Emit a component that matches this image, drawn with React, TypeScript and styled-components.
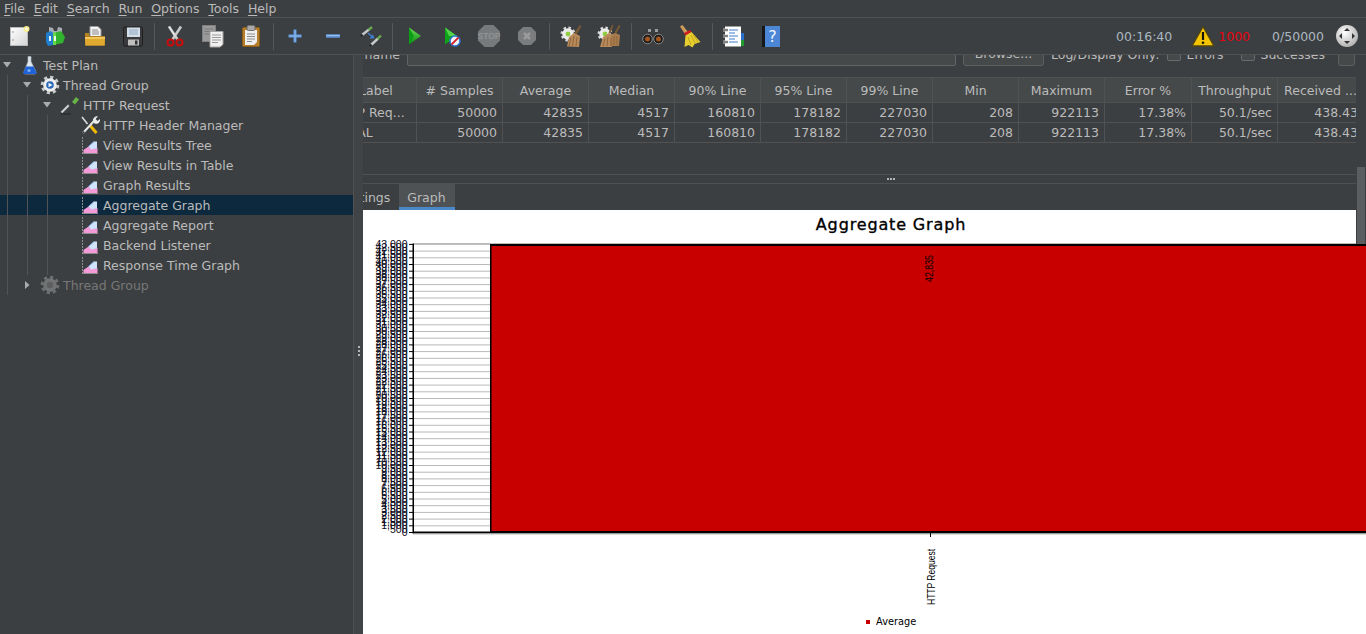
import React from 'react'
import styled, { createGlobalStyle } from 'styled-components'

const GlobalStyle = createGlobalStyle`
  html, body {
    margin: 0;
    height: 100%;
    overflow: hidden;
    background: #3c3f41;
  }
`

const Window = styled.div`
  width: 1366px;
  height: 634px;
  display: flex;
  flex-direction: column;
  overflow: hidden;
  background: #3c3f41;
  color: #bbbbbb;
  font: 12.5px 'DejaVu Sans', sans-serif;
`

const MenuBar = styled.div`
  height: 17px;
  flex: none;
  display: flex;
  align-items: center;
  gap: 8.8px;
  padding-left: 4px;
  border-bottom: 1px solid #515151;
`

const MenuItem = styled.span`
  line-height: 16px;
  & u {
    text-underline-offset: 2px;
  }
`

const Toolbar = styled.div`
  height: 36px;
  flex: none;
  display: flex;
  align-items: center;
  border-bottom: 1px solid #515151;
  position: relative;
  z-index: 2;
  background: #3c3f41;
`

const ToolButton = styled.div`
  width: 38px;
  height: 36px;
  flex: none;
  display: flex;
  align-items: center;
  justify-content: center;
`

const Separator = styled.div<{ $w: number }>`
  width: ${p => p.$w}px;
  height: 27px;
  flex: none;
  display: flex;
  justify-content: center;
  &::after {
    content: '';
    width: 1px;
    background: #55585a;
  }
`

const Status = styled.div`
  margin-left: auto;
  display: flex;
  align-items: center;
  padding-right: 7px;
`

const StatusText = styled.span<{ $left: number; $red?: boolean }>`
  margin-left: ${p => p.$left}px;
  color: ${p => (p.$red ? '#e8000d' : '#a9b7c0')};
`

const StatusIcon = styled.div<{ $left: number }>`
  margin-left: ${p => p.$left}px;
  height: 24px;
`

const Body = styled.div`
  flex: 1;
  min-height: 0;
  display: flex;
`

const TreePane = styled.div`
  width: 353px;
  flex: none;
`

const TreeRow = styled.div<{ $selected?: boolean; $disabled?: boolean }>`
  height: 20px;
  display: flex;
  align-items: center;
  background: ${p => (p.$selected ? '#0d293e' : 'transparent')};
  color: ${p => (p.$disabled ? '#777777' : '#bbbbbb')};
`

const Guide = styled.span`
  width: 20px;
  height: 20px;
  flex: none;
  background: linear-gradient(#515356, #515356) 7px 0 / 1px 100% no-repeat;
`

const ArrowCell = styled.span`
  width: 20px;
  height: 20px;
  flex: none;
  display: flex;
  align-items: center;
`

const TreeIconBox = styled.span`
  width: 20px;
  height: 20px;
  flex: none;
  margin-right: 3px;
`

const Splitter = styled.div`
  width: 10px;
  flex: none;
  box-sizing: border-box;
  border-left: 1px solid #515151;
  background: #414446;
  display: flex;
  flex-direction: column;
  gap: 2px;
  align-items: center;
  justify-content: center;
  padding-top: 12px;
`

const Dot = styled.i`
  width: 2px;
  height: 2px;
  background: #b5b5b5;
  display: block;
`

const Main = styled.div`
  flex: 1;
  min-width: 0;
  position: relative;
  overflow: hidden;
  display: flex;
  flex-direction: column;
`

const FormRow = styled.div`
  height: 24px;
  flex: none;
  margin-top: -13px;
  display: flex;
  align-items: center;
  white-space: nowrap;
`

const FormLabel = styled.span`
  width: 37px;
  flex: none;
  overflow: hidden;
  direction: rtl;
`

const FormInput = styled.div`
  width: 549px;
  height: 23px;
  margin-left: 7px;
  flex: none;
  box-sizing: border-box;
  border: 1px solid #646464;
  border-radius: 2px;
  background: #45494a;
`

const FormButton = styled.div<{ $w: number; $left: number }>`
  width: ${p => p.$w}px;
  height: 23px;
  margin-left: ${p => p.$left}px;
  flex: none;
  box-sizing: border-box;
  border: 1px solid #5e6060;
  border-radius: 3px;
  background: #45494a;
  text-align: center;
  line-height: 20px;
`

const FormText = styled.span<{ $left: number }>`
  margin-left: ${p => p.$left}px;
`

const CheckBox = styled.span<{ $left: number }>`
  width: 14px;
  height: 14px;
  margin-left: ${p => p.$left}px;
  flex: none;
  box-sizing: border-box;
  border: 1px solid #6b6b6b;
  border-radius: 2px;
  background: #45494a;
`

const TableClip = styled.div`
  margin-top: 11px;
  margin-right: 10px;
  flex: none;
  overflow: hidden;
`

const TableRow = styled.div<{ $head?: boolean }>`
  display: flex;
  margin-left: -33px;
  width: 1040px;
  height: ${p => (p.$head ? 24 : 19)}px;
  line-height: ${p => (p.$head ? 26 : 19)}px;
  border-top: ${p => (p.$head ? '1px solid #515151' : 'none')};
  border-bottom: 1px solid #515151;
  background: ${p => (p.$head ? '#45494a' : 'transparent')};
`

const Cell = styled.div<{ $w: number; $align: string; $pad: string }>`
  width: ${p => p.$w}px;
  flex: none;
  box-sizing: border-box;
  border-right: 1px solid #515151;
  text-align: ${p => p.$align};
  padding: ${p => p.$pad};
  white-space: nowrap;
  overflow: hidden;
`

const HSplit = styled.div`
  margin-top: 31px;
  height: 8px;
  flex: none;
  margin-right: 10px;
  padding-left: 62px;
  border-top: 1px solid #515151;
  border-bottom: 1px solid #515151;
  display: flex;
  align-items: center;
  justify-content: center;
  gap: 1px;
`

const TabBar = styled.div`
  height: 26px;
  flex: none;
  display: flex;
  margin-left: -32px;
`

const Tab = styled.div<{ $active?: boolean }>`
  box-sizing: border-box;
  padding: 0 9px 0 8px;
  line-height: 27px;
  background: ${p => (p.$active ? '#4e5254' : 'transparent')};
  border-bottom: 3px solid ${p => (p.$active ? '#4a88c7' : 'transparent')};
`

const ChartCanvas = styled.svg`
  display: block;
  flex: none;
  background: #ffffff;
`

const ScrollThumb = styled.div`
  position: absolute;
  top: 112px;
  right: 0;
  width: 8px;
  height: 77px;
  background: #5b5d5f;
  border-left: 1px solid #3c3f41;
  border-right: 1px solid #3c3f41;
`

// toolbar drawings, all on a 24px square
const NewIcon = () => (
  <svg width="24" height="24">
    <defs>
      <linearGradient id="pg" x1="0" y1="0" x2="1" y2="1">
        <stop offset="0" stopColor="#ffffff" />
        <stop offset="1" stopColor="#d4d4d4" />
      </linearGradient>
    </defs>
    <rect x="3.500" y="3.500" width="17" height="18" fill="url(#pg)" stroke="#b9b9b9" />
    <circle cx="6" cy="8" r="0.8" fill="#888" />
    <circle cx="6" cy="16" r="0.8" fill="#888" />
    <circle cx="19.500" cy="5" r="3" fill="#f7e98a" />
    <circle cx="19.500" cy="5" r="1.500" fill="#fffde0" />
  </svg>
)

const TemplatesIcon = () => (
  <svg width="24" height="24">
    <path d="M4 3l4 1 1 3h3l1-4 4 1v5H4z" fill="#a8aeb4" />
    <path d="M1 9l5-2 2 2v12l-5 1-2-4z" fill="#1f7fce" />
    <rect x="4" y="12" width="2" height="5" fill="#e9f4fb" />
    <path d="M8 9l8-2 4 6-2 6-10 2z" fill="#32b32f" />
    <path d="M8 9l3-1v13l-3 0z" fill="#66d84a" />
    <rect x="9" y="12" width="2" height="5" fill="#e8fbe5" />
  </svg>
)

const OpenIcon = () => (
  <svg width="24" height="24">
    <path d="M7 2.500h8l3 3v9H7z" fill="#f3f3f3" stroke="#9c9c9c" />
    <path d="M9 6h6M9 8h7M9 10h7" stroke="#8b8b8b" />
    <path d="M2 9h4v3h16v9.500H2z" fill="#b5831d" />
    <path d="M2 13h20l-.5 8.500H2.500z" fill="#e0aa2f" />
    <path d="M2 13h20v2H2z" fill="#f1c75d" />
  </svg>
)

const SaveIcon = () => (
  <svg width="24" height="24">
    <rect x="2.500" y="3" width="19" height="19" rx="1.500" fill="#3a3a3c" stroke="#1e1e1e" />
    <rect x="6" y="3.500" width="13" height="9.500" fill="#d5dfe9" />
    <path d="M8 6h9M8 8h9M8 10h9" stroke="#8fa8c2" />
    <rect x="7" y="15.500" width="11" height="6" fill="#bfbfbf" />
    <rect x="14" y="16.500" width="2.500" height="4" fill="#333" />
  </svg>
)

const CutIcon = () => (
  <svg width="24" height="24">
    <path d="M6 2.500l8.500 13M18 2.500L9.500 15.500" stroke="#c9c9c9" strokeWidth="2.600" />
    <path d="M6 2.500l6.500 10" stroke="#f2f2f2" />
    <circle cx="7.500" cy="18.500" r="3" fill="none" stroke="#c80d0d" strokeWidth="2" />
    <circle cx="16.500" cy="18.500" r="3" fill="none" stroke="#c80d0d" strokeWidth="2" />
  </svg>
)

const CopyIcon = () => (
  <svg width="24" height="24">
    <rect x="1.500" y="1.500" width="13" height="16" fill="#9a9a9a" stroke="#808080" />
    <path d="M3.500 5h9M3.500 7.500h9M3.500 10h9" stroke="#7a7a7a" />
    <path d="M9 7.500h13v13l-3 2.500H9z" fill="#f0f0f0" stroke="#a5a5a5" />
    <path d="M11 11h9M11 13.500h9M11 16h9M11 18.500h6" stroke="#9a9a9a" />
  </svg>
)

const PasteIcon = () => (
  <svg width="24" height="24">
    <rect x="3.500" y="3.500" width="17" height="19" rx="1" fill="#b67e2a" stroke="#8a5c16" />
    <path d="M6 6h12v12l-3 3H6z" fill="#efefef" />
    <path d="M8 10h8M8 12.500h8M8 15h8M8 17.500h5" stroke="#8c8c8c" />
    <rect x="8" y="1.500" width="8" height="5" rx="1.500" fill="#a8a8a8" stroke="#6f6f6f" />
  </svg>
)

const PlusIcon = () => (
  <svg width="24" height="24">
    <path d="M12 5.500v13M5.500 12h13" stroke="#5f97db" strokeWidth="3" />
    <path d="M12 6v12M6 12h12" stroke="#8bb7ea" />
  </svg>
)

const MinusIcon = () => (
  <svg width="24" height="24">
    <path d="M5 12h14" stroke="#5f97db" strokeWidth="3.500" />
    <path d="M5.500 11.500h13" stroke="#9bc0ed" />
  </svg>
)

const ToggleIcon = () => (
  <svg width="24" height="24">
    <path d="M3 11l7-5.500" stroke="#c8c8c8" strokeWidth="2.400" />
    <path d="M2 12l1.500-1.500" stroke="#222" strokeWidth="2" />
    <path d="M9.500 6l3.500-3" stroke="#6aa84f" strokeWidth="2.400" />
    <path d="M12 21l7-6.500" stroke="#c8c8c8" strokeWidth="2.400" />
    <path d="M11 22l1.500-1.500" stroke="#222" strokeWidth="2" />
    <path d="M18.500 15l3.500-3.500" stroke="#6aa84f" strokeWidth="2.400" />
    <path d="M9 9l4 3.500" stroke="#3f7fd0" strokeWidth="1.500" />
    <path d="M15.500 14.500l-5 0 3.500-4z" fill="#3f7fd0" />
  </svg>
)

const PlayIcon = () => (
  <svg width="24" height="24">
    <defs>
      <linearGradient id="gr" x1="0" y1="0" x2="0" y2="1">
        <stop offset="0" stopColor="#6fe05b" />
        <stop offset="1" stopColor="#06890e" />
      </linearGradient>
    </defs>
    <path d="M8 3.500L20 12 8 20.500z" fill="url(#gr)" />
    <path d="M8 3.500V20.500L13 12z" fill="#0a9d16" />
  </svg>
)

const PlayNoPauseIcon = () => (
  <svg width="24" height="24">
    <path d="M6 3.500L18 12 6 20.500z" fill="#10a31a" />
    <path d="M6 3.500L18 12H10z" fill="#54d44a" />
    <circle cx="16" cy="17" r="5" fill="#f2f6fc" stroke="#2d73d0" strokeWidth="1.500" />
    <path d="M12.500 20.500l7-7" stroke="#d8232a" strokeWidth="1.800" />
  </svg>
)

const StopIcon = () => (
  <svg width="24" height="24">
    <path d="M7.500 1h9L23 7.500v9L16.500 23h-9L1 16.500v-9z" fill="#777a7c" />
    <text x="12" y="15" textAnchor="middle" fontFamily="'Liberation Sans', sans-serif" fontSize="8.500" fontWeight="700" fill="#909395">STOP</text>
  </svg>
)

const ShutdownIcon = () => (
  <svg width="24" height="24">
    <path d="M8 3h8l5 5v8l-5 5H8l-5-5V8z" fill="#7a7c7e" />
    <path d="M9 9l6 6M15 9l-6 6" stroke="#999b9d" strokeWidth="2.500" />
  </svg>
)

const ClearIcon = () => (
  <svg width="24" height="24">
    <circle cx="9" cy="10" r="6.300" fill="none" stroke="#d8d8d8" strokeWidth="2.400" strokeDasharray="2.400 2.500" />
    <circle cx="9" cy="10" r="5.800" fill="#ececec" />
    <circle cx="9" cy="10" r="2.400" fill="#8fcf3f" />
    <path d="M21 1l1.500 1-5 9-2.500-1.500z" fill="#7a5a35" />
    <path d="M8 22.500l2-9.500 5-4 6 3-1 11z" fill="#b98a5c" />
    <path d="M12 14l-2 8M15 12l-1.500 10M18 13l-1 9" stroke="#8d6538" />
  </svg>
)

const ClearAllIcon = () => (
  <svg width="24" height="24">
    <circle cx="8" cy="10" r="6.300" fill="none" stroke="#d8d8d8" strokeWidth="2.400" strokeDasharray="2.400 2.500" />
    <circle cx="8" cy="10" r="5.800" fill="#ececec" />
    <circle cx="8" cy="10" r="2.400" fill="#8fcf3f" />
    <path d="M15 1l1.500 .5-3 8-2-1zM22 1l1.500 .5-4 8-2-1z" fill="#7a5a35" />
    <path d="M3 23l3-10 6-4 4 2-1 12z" fill="#b98a5c" />
    <path d="M13 22l1-11 4-2 5 2-1 11z" fill="#a97c4f" />
    <path d="M8 15l-2 7M11 13l-1 9M14 14l0 8M17 12l0 9M20 12l0 9" stroke="#8d6538" />
  </svg>
)

const BinocularsIcon = () => (
  <svg width="24" height="24">
    <path d="M6 6h4v3h4V6h4l4 8H2z" fill="#3a3a3c" />
    <path d="M7 5h3v3H7zM14 5h3v3h-3z" fill="#9a9a9a" />
    <circle cx="6.500" cy="15" r="4.800" fill="#1b1b1b" stroke="#8b8b8b" />
    <circle cx="17.500" cy="15" r="4.800" fill="#1b1b1b" stroke="#8b8b8b" />
    <circle cx="6.500" cy="15" r="2.500" fill="#a4561f" />
    <circle cx="17.500" cy="15" r="2.500" fill="#a4561f" />
  </svg>
)

const BroomIcon = () => (
  <svg width="24" height="24">
    <path d="M1 2.500l2.500-1.500 5.500 7-3 2z" fill="#cf9a5a" />
    <path d="M5 9l6-3 1.500 2-6 3.500z" fill="#d71920" />
    <path d="M6.500 11.500l6-3.500 9 10-6 2-2 3.500-4-2.500-4 2z" fill="#e8cf30" />
    <path d="M9 13l3 8M12 11l4 8M14 10l5 8" stroke="#bfa51c" />
  </svg>
)

const FunctionIcon = () => (
  <svg width="24" height="24">
    <rect x="19" y="9" width="4" height="7" fill="#2b6fce" />
    <rect x="19" y="16" width="4" height="6" fill="#1f9a2f" />
    <rect x="4" y="2.500" width="16" height="20" fill="#ffffff" />
    <path d="M8 6h9M8 9h6M8 12h9M8 15h6M8 18h9" stroke="#3f7fd0" />
    <path d="M2 6h5M2 12h5M2 18h5" stroke="#c9c9c9" strokeWidth="3" />
    <path d="M2 6h5M2 12h5M2 18h5" stroke="#3a3a3a" />
  </svg>
)

const HelpIcon = () => (
  <svg width="24" height="24">
    <rect x="3" y="2" width="4" height="21" fill="#17181a" />
    <rect x="6" y="2" width="15" height="21" fill="#4c86d6" />
    <text x="13.500" y="18" textAnchor="middle" fontFamily="'DejaVu Sans', sans-serif" fontSize="16" fill="#f0f6ff">?</text>
  </svg>
)

const WarnIcon = () => (
  <svg width="24" height="24">
    <path d="M12 2.500L23 22H1z" fill="#f4c400" stroke="#4f4415" strokeWidth="1.500" strokeLinejoin="round" />
    <path d="M12 8v8" stroke="#17150a" strokeWidth="2.200" />
    <circle cx="12" cy="18.700" r="1.300" fill="#17150a" />
  </svg>
)

const GlobeIcon = () => (
  <svg width="24" height="24">
    <defs>
      <radialGradient id="gl" cx="0.4" cy="0.35" r="0.75">
        <stop offset="0" stopColor="#ffffff" />
        <stop offset="1" stopColor="#a8a8a8" />
      </radialGradient>
    </defs>
    <circle cx="12" cy="12" r="11" fill="url(#gl)" />
    <path d="M12 4l3 3H9zM12 20l3-3H9zM4 12l3-3v6zM20 12l-3-3v6z" fill="#333" />
  </svg>
)

// tree drawings
const FlaskIcon = () => (
  <svg width="20" height="20">
    <path d="M8 1.500h3v5l5 10.500a1.500 1.500 0 0 1-1.500 2h-9a1.500 1.500 0 0 1-1.500-2L8 6.500z" fill="#dfe6ee" stroke="#a9b2bb" strokeWidth="0.700" />
    <path d="M6 11.500h7.500l3 6a1.200 1.200 0 0 1-1.200 1.500H4.500a1.200 1.200 0 0 1-1.200-1.500z" fill="#1f63d8" />
    <circle cx="9" cy="15.500" r="1.600" fill="#79adf3" />
  </svg>
)

const GearIcon = ({ dim }: { dim?: boolean }) => (
  <svg width="20" height="20">
    <circle cx="10" cy="10" r="7.800" fill="none" stroke={dim ? '#6d6f70' : '#c6c8ca'} strokeWidth="3" strokeDasharray="3.200 2.900" />
    <circle cx="10" cy="10" r="6.800" fill={dim ? '#717374' : '#eeeeee'} />
    {dim
      ? <circle cx="10" cy="10" r="3.200" fill="#5d5f60" />
      : <>
          <circle cx="10" cy="10" r="3.800" fill="#2a67b8" />
          <path d="M8.500 7.800l4 2.200-4 2.200z" fill="#f2f6fb" />
        </>}
  </svg>
)

const PipetteIcon = () => (
  <svg width="20" height="20">
    <path d="M1.500 17.500l8-8" stroke="#cfcfcf" strokeWidth="2.200" />
    <path d="M8 9.500l3.500-3.500 3 3-3.500 3.500z" fill="#3a3d3f" />
    <path d="M12 7l4-5 3 2.500-4 5z" fill="#67b346" />
    <path d="M1 19h10" stroke="#2b2d2f" strokeWidth="1.500" />
  </svg>
)

const ToolsIcon = () => (
  <svg width="20" height="20">
    <path d="M2 2l5.500 7" stroke="#dfdfdf" strokeWidth="1.500" />
    <path d="M10 10.500l6.500 7.500" stroke="#f0b800" strokeWidth="3" />
    <path d="M3 18l11-12" stroke="#e6e6e6" strokeWidth="2" />
    <path d="M13 6a4 4 0 0 1 5-4.500l-2.500 2.500 2 2 2.500-2a4 4 0 0 1-5.500 4.500z" fill="#ededed" />
    <path d="M2 19l3-1.500-1.500-1.500z" fill="#333" />
  </svg>
)

const GraphIcon = () => (
  <svg width="20" height="20">
    <path d="M2.500 2v17.500" stroke="#8f8f8f" strokeDasharray="2 1" />
    <path d="M3 18.500h15" stroke="#8a8a8a" />
    <path d="M3.500 18v-3l5-3.500 3 2.500 6-1v5z" fill="#f59ad8" />
    <path d="M8.500 11.500l5.500-5h3v7l-6 1z" fill="#cfe4fb" />
    <path d="M8.500 11.500l5.500-5" stroke="#7fa9dc" />
  </svg>
)

const ArrowDown = () => (
  <svg width="14" height="8">
    <path d="M3 1h8L7 6.500z" fill="#a9abad" />
  </svg>
)

const ArrowRight = () => (
  <svg width="14" height="10">
    <path d="M5 1v8l4.500-4z" fill="#a9abad" />
  </svg>
)

type ToolItem = { icon?: React.ReactNode; sep?: number }

const toolItems: ToolItem[] = [
  { icon: <NewIcon /> },
  { icon: <TemplatesIcon /> },
  { icon: <OpenIcon /> },
  { icon: <SaveIcon /> },
  { sep: 4 },
  { icon: <CutIcon /> },
  { icon: <CopyIcon /> },
  { icon: <PasteIcon /> },
  { sep: 6 },
  { icon: <PlusIcon /> },
  { icon: <MinusIcon /> },
  { icon: <ToggleIcon /> },
  { sep: 4 },
  { icon: <PlayIcon /> },
  { icon: <PlayNoPauseIcon /> },
  { icon: <StopIcon /> },
  { icon: <ShutdownIcon /> },
  { sep: 6 },
  { icon: <ClearIcon /> },
  { icon: <ClearAllIcon /> },
  { sep: 6 },
  { icon: <BinocularsIcon /> },
  { icon: <BroomIcon /> },
  { sep: 4 },
  { icon: <FunctionIcon /> },
  { icon: <HelpIcon /> }
]

type TreeNode = {
  label: string
  depth: number
  icon: React.ReactNode
  arrow?: 'down' | 'right'
  selected?: boolean
  disabled?: boolean
}

const treeNodes: TreeNode[] = [
  { label: 'Test Plan', depth: 0, icon: <FlaskIcon />, arrow: 'down' },
  { label: 'Thread Group', depth: 1, icon: <GearIcon />, arrow: 'down' },
  { label: 'HTTP Request', depth: 2, icon: <PipetteIcon />, arrow: 'down' },
  { label: 'HTTP Header Manager', depth: 3, icon: <ToolsIcon /> },
  { label: 'View Results Tree', depth: 3, icon: <GraphIcon /> },
  { label: 'View Results in Table', depth: 3, icon: <GraphIcon /> },
  { label: 'Graph Results', depth: 3, icon: <GraphIcon /> },
  { label: 'Aggregate Graph', depth: 3, icon: <GraphIcon />, selected: true },
  { label: 'Aggregate Report', depth: 3, icon: <GraphIcon /> },
  { label: 'Backend Listener', depth: 3, icon: <GraphIcon /> },
  { label: 'Response Time Graph', depth: 3, icon: <GraphIcon /> },
  { label: 'Thread Group', depth: 1, icon: <GearIcon dim />, arrow: 'right', disabled: true }
]

const columns = [
  { head: 'Label', w: 87 },
  { head: '# Samples', w: 86 },
  { head: 'Average', w: 86 },
  { head: 'Median', w: 86 },
  { head: '90% Line', w: 86 },
  { head: '95% Line', w: 86 },
  { head: '99% Line', w: 86 },
  { head: 'Min', w: 86 },
  { head: 'Maximum', w: 86 },
  { head: 'Error %', w: 87 },
  { head: 'Throughput', w: 86 },
  { head: 'Received ...', w: 86 }
]

const numbers = ['50000', '42835', '4517', '160810', '178182', '227030', '208', '922113', '17.38%', '50.1/sec', '438.43']
const rows = [
  ['HTTP Req...', ...numbers],
  ['TOTAL', ...numbers]
]

const axisFont = "'Liberation Sans', sans-serif"
const steps = Array.from({ length: 44 }, (_, i) => i)
const halfSteps = Array.from({ length: 87 }, (_, i) => i * 0.5)
const yFor = (i: number) => 532 - i * 6.7

const axisLabel = (v: number) => (v === 0 ? '0' : (v * 1000).toLocaleString('en-US'))

const AggregateChart = () => (
  <ChartCanvas width="1003" height="424" viewBox="363 210 1003 424">
    <text x="891" y="229.500" textAnchor="middle" fontFamily="'DejaVu Sans', sans-serif" fontSize="16" stroke="#000" strokeWidth="0.350" letterSpacing="0.850">Aggregate Graph</text>
    {steps.map(i => (
      <line key={i} x1="414" x2="491" y1={yFor(i) + 0.5} y2={yFor(i) + 0.5} stroke="#b9b9b9" />
    ))}
    <line x1="414" x2="1366" y1="243.500" y2="243.500" stroke="#b9b9b9" />
    <rect x="490" y="244" width="876" height="288" fill="#000" />
    <rect x="491.500" y="246" width="875" height="285" fill="#c80000" />
    {steps.map(i => (
      <line key={i} x1="409" x2="414" y1={yFor(i) + 0.5} y2={yFor(i) + 0.5} stroke="#000" />
    ))}
    {halfSteps.map(v => (
      <text key={v} x="407.500" y={yFor(v) + 4} textAnchor="end" fontFamily={axisFont} fontSize="10.500" fill="#0c0c20">
        {axisLabel(v)}
      </text>
    ))}
    <rect x="412.500" y="243.500" width="1.500" height="290" fill="#000" />
    <rect x="413" y="531.500" width="953" height="2" fill="#000" />
    <line x1="413" x2="1366" y1="534" y2="534" stroke="#b9b9b9" />
    <line x1="930.500" x2="930.500" y1="533" y2="537" stroke="#000" />
    <text transform="translate(933 282) rotate(-90)" fontFamily={axisFont} fontSize="10.500" textLength="27" lengthAdjust="spacingAndGlyphs" fill="#000">42,835</text>
    <text transform="translate(934.500 605) rotate(-90)" fontFamily={axisFont} fontSize="10.500" textLength="56" lengthAdjust="spacingAndGlyphs" fill="#000">HTTP Request</text>
    <rect x="866" y="620" width="4" height="4" fill="#c80000" />
    <text x="876" y="625" fontFamily="'DejaVu Sans', sans-serif" fontSize="9.800" fill="#000">Average</text>
  </ChartCanvas>
)

const menus: [string, string][] = [
  ['F', 'ile'],
  ['E', 'dit'],
  ['S', 'earch'],
  ['R', 'un'],
  ['O', 'ptions'],
  ['T', 'ools'],
  ['H', 'elp']
]

export default function App() {
  return (
    <Window>
      <GlobalStyle />
      <MenuBar>
        {menus.map(([first, rest]) => (
          <MenuItem key={first}><u>{first}</u>{rest}</MenuItem>
        ))}
      </MenuBar>
      <Toolbar>
        {toolItems.map((item, i) =>
          item.sep
            ? <Separator key={i} $w={item.sep} />
            : <ToolButton key={i}>{item.icon}</ToolButton>
        )}
        <Status>
          <StatusText $left={0}>00:16:40</StatusText>
          <StatusIcon $left={19}><WarnIcon /></StatusIcon>
          <StatusText $left={3} $red>1000</StatusText>
          <StatusText $left={22}>0/50000</StatusText>
          <StatusIcon $left={11}><GlobeIcon /></StatusIcon>
        </Status>
      </Toolbar>
      <Body>
        <TreePane>
          {treeNodes.map((node, i) => (
            <TreeRow key={i} $selected={node.selected} $disabled={node.disabled}>
              {Array.from({ length: node.depth }, (_, g) => <Guide key={g} />)}
              <ArrowCell>
                {node.arrow === 'down' && <ArrowDown />}
                {node.arrow === 'right' && <ArrowRight />}
              </ArrowCell>
              <TreeIconBox>{node.icon}</TreeIconBox>
              {node.label}
            </TreeRow>
          ))}
        </TreePane>
        <Splitter><Dot /><Dot /><Dot /></Splitter>
        <Main>
          <FormRow>
            <FormLabel>name</FormLabel>
            <FormInput />
            <FormButton $w={81} $left={7}>Browse...</FormButton>
            <FormText $left={7}>Log/Display Only:</FormText>
            <CheckBox $left={7} />
            <FormText $left={6}>Errors</FormText>
            <CheckBox $left={17} />
            <FormText $left={6}>Successes</FormText>
            <FormButton $w={17} $left={13} />
          </FormRow>
          <TableClip>
            <TableRow $head>
              {columns.map((c, i) => (
                <Cell key={c.head} $w={c.w} $align="center" $pad={i === 0 ? '0 0 0 6px' : '0'}>{c.head}</Cell>
              ))}
            </TableRow>
            {rows.map(row => (
              <TableRow key={row[0]}>
                {row.map((v, i) => (
                  <Cell key={i} $w={columns[i].w} $align={i === 0 ? 'left' : 'right'} $pad={i === 0 ? '0 0 0 3px' : '0 5px 0 0'}>{v}</Cell>
                ))}
              </TableRow>
            ))}
          </TableClip>
          <HSplit><Dot /><Dot /><Dot /></HSplit>
          <TabBar>
            <Tab>Settings</Tab>
            <Tab $active>Graph</Tab>
          </TabBar>
          <AggregateChart />
          <ScrollThumb />
        </Main>
      </Body>
    </Window>
  )
}
